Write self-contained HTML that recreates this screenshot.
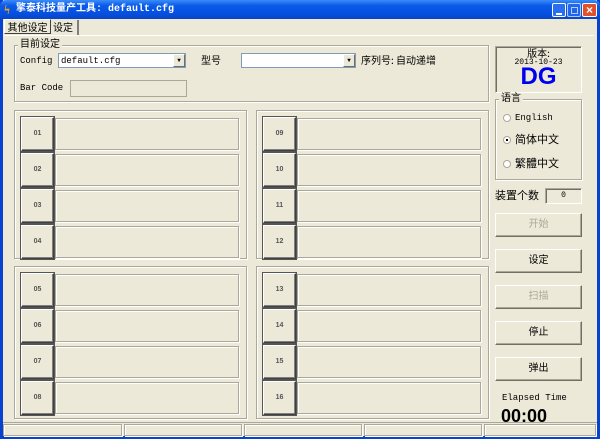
<!DOCTYPE html>
<html><head><meta charset="utf-8"><style>
*{box-sizing:border-box;margin:0;padding:0}
body{width:600px;height:439px;overflow:hidden;background:#0842d0;font-family:"Liberation Mono","Noto Sans CJK SC",monospace;font-size:9px;color:#000;position:relative;line-height:1.15}
.a{position:absolute}
.win{left:3px;top:0;width:594px;height:436px;background:#ece9d8}
.title{left:0;top:0;width:600px;height:19px;background:linear-gradient(#3a8cf8,#0a5ae8 30%,#0550e0 70%,#0846c8);border-radius:6px 6px 0 0}
.etch{border:1px solid #aca899;box-shadow:1px 1px 0 #fff inset,1px 1px 0 #fff}
.sunk{border:1px solid;border-color:#aca899 #fff #fff #aca899;box-shadow:inset 1px 1px 0 #716f64}
.fld{border:1px solid #aca899;box-shadow:inset 1px 1px 0 #fff,1px 1px 0 #fff}
.sb{width:33px;height:34px;background:#ece9d8;border:1px solid;border-color:#fff #404040 #404040 #fff;box-shadow:inset -1px -1px 0 #808080,0 0 0 1px #555;font-size:7px;display:flex;align-items:center;justify-content:center;font-family:"Liberation Sans",sans-serif;font-weight:bold;color:#555}
.btn{left:495px;width:87px;height:24px;border:1px solid;border-color:#fff #716f64 #716f64 #fff;box-shadow:inset -1px -1px 0 #aca899;display:flex;align-items:center;justify-content:center;font-family:"Liberation Sans","Noto Sans CJK SC",sans-serif;font-size:10px}
.dis{color:#aca899}
.leg{background:#ece9d8;padding:0 2px;font-family:"Liberation Sans","Noto Sans CJK SC",sans-serif;font-size:10px}
.cb{background:#fff;border:1px solid #7f9db9}
.arr{position:absolute;right:0;top:0;width:12px;height:13px;background:#ece9d8;border:1px solid;border-color:#fff #716f64 #716f64 #fff;font-size:6px;text-align:center;line-height:11px}
.tb{top:3px;width:14px;height:14px;border:1px solid #fff;border-radius:2px;background:#2a6ef0}
</style></head><body>
<div class="a win"></div>
<div class="a title"></div>
<div class="a" style="left:4px;top:3px;color:#f0a020;font:bold 13px 'Liberation Serif',serif;line-height:1">ϟ</div>
<div class="a" style="left:16px;top:4px;color:#fff;font:bold 10px 'Liberation Mono','Noto Sans CJK SC',monospace;line-height:1.1">擎泰科技量产工具: default.cfg</div>
<div class="a tb" style="left:552px"><div class="a" style="left:3px;top:9px;width:6px;height:2px;background:#fff"></div></div>
<div class="a tb" style="left:567px;opacity:.7"><div class="a" style="left:3px;top:3px;width:7px;height:7px;border:1px solid #fff"></div></div>
<div class="a tb" style="left:582px;width:15px;background:#e0502a;color:#fff;font:bold 12px sans-serif;text-align:center;line-height:12px">×</div>
<div class="a" style="left:4px;top:19px;width:47px;height:15px;border:1px solid;border-color:#fff #404040 #404040 #fff;font:10px 'Noto Sans CJK SC',sans-serif;text-align:center;line-height:13px">其他设定</div>
<div class="a" style="left:53px;top:20px;width:26px;height:15px;border-right:2px solid #808080;font:10px 'Noto Sans CJK SC',sans-serif;line-height:14px">设定</div>
<div class="a" style="left:4px;top:35px;width:590px;height:1px;background:#fff"></div>
<div class="a etch" style="left:14px;top:45px;width:475px;height:57px"></div>
<div class="a leg" style="left:18px;top:38px;line-height:13px">目前设定</div>
<div class="a" style="left:20px;top:56px">Config</div>
<div class="a cb" style="left:58px;top:53px;width:128px;height:15px"><span style="position:absolute;left:2px;top:2px">default.cfg</span><div class="arr">▼</div></div>
<div class="a" style="left:201px;top:54px;font:10px 'Noto Sans CJK SC',sans-serif;line-height:12px">型号</div>
<div class="a cb" style="left:241px;top:53px;width:115px;height:15px"><div class="arr">▼</div></div>
<div class="a" style="left:361px;top:54px;font:10px 'Noto Sans CJK SC',sans-serif;line-height:12px">序列号: 自动递增</div>
<div class="a" style="left:20px;top:83px">Bar Code</div>
<div class="a sunk" style="left:70px;top:80px;width:117px;height:17px;box-shadow:none;border-color:#aca899"></div>
<div class="a sunk" style="left:495px;top:46px;width:87px;height:47px"></div>
<div class="a" style="left:495px;top:47px;width:87px;text-align:center;font:10px 'Noto Sans CJK SC',sans-serif;line-height:11px">版本:</div>
<div class="a" style="left:495px;top:58px;width:87px;text-align:center;font-size:8px;line-height:9px">2013-10-23</div>
<div class="a" style="left:495px;top:66px;width:87px;text-align:center;font:bold 24px 'Liberation Sans',sans-serif;color:#0000f0;line-height:22px">DG</div>
<div class="a etch" style="left:495px;top:99px;width:87px;height:81px"></div>
<div class="a leg" style="left:499px;top:93px;line-height:12px">语言</div>
<div class="a" style="left:503px;top:114px;width:8px;height:8px;border-radius:50%;border:1px solid #aca899;background:#fff"></div>
<div class="a" style="left:515px;top:113px;font-size:9px">English</div>
<div class="a" style="left:503px;top:136px;width:8px;height:8px;border-radius:50%;border:1px solid #aca899;background:#fff"><div class="a" style="left:2px;top:2px;width:2px;height:2px;background:#000"></div></div>
<div class="a" style="left:515px;top:133px;font:11px 'Noto Sans CJK SC',sans-serif;line-height:13px">简体中文</div>
<div class="a" style="left:503px;top:160px;width:8px;height:8px;border-radius:50%;border:1px solid #aca899;background:#fff"></div>
<div class="a" style="left:515px;top:157px;font:11px 'Noto Sans CJK SC',sans-serif;line-height:13px">繁體中文</div>
<div class="a" style="left:495px;top:189px;font:11px 'Noto Sans CJK SC',sans-serif;line-height:13px">装置个数</div>
<div class="a sunk" style="left:545px;top:188px;width:37px;height:16px;text-align:center;line-height:13px;font-size:8px">0</div>
<div class="a btn dis" style="top:213px">开始</div>
<div class="a btn" style="top:249px">设定</div>
<div class="a btn dis" style="top:285px">扫描</div>
<div class="a btn" style="top:321px">停止</div>
<div class="a btn" style="top:357px">弹出</div>
<div class="a" style="left:502px;top:393px;font-size:9px">Elapsed Time</div>
<div class="a" style="left:501px;top:406px;font:bold 18px 'Liberation Sans',sans-serif;line-height:20px">00:00</div>
<div class="a etch" style="left:14px;top:110px;width:233px;height:149px"></div>
<div class="a etch" style="left:256px;top:110px;width:233px;height:149px"></div>
<div class="a etch" style="left:14px;top:266px;width:233px;height:153px"></div>
<div class="a etch" style="left:256px;top:266px;width:233px;height:153px"></div>
<div id="slots"></div>
<div class="a" style="left:3px;top:422px;width:594px;height:1px;background:#aca899"></div>
<div class="a fld" style="left:3px;top:424px;width:119px;height:12px"></div>
<div class="a fld" style="left:124px;top:424px;width:118px;height:12px"></div>
<div class="a fld" style="left:244px;top:424px;width:118px;height:12px"></div>
<div class="a fld" style="left:364px;top:424px;width:118px;height:12px"></div>
<div class="a fld" style="left:484px;top:424px;width:112px;height:12px"></div>
<script>
var s='',ys=[117,153,189,225,273,309,345,381];
for(var c=0;c<2;c++)for(var i=0;i<8;i++){var n=c*8+i+1,x=c?263:21,y=ys[i];
s+='<div class="a sb" style="left:'+x+'px;top:'+y+'px">'+(n<10?'0':'')+n+'</div>';
s+='<div class="a fld" style="left:'+(x+34)+'px;top:'+(y+1)+'px;width:184px;height:32px"></div>';}
document.getElementById('slots').innerHTML=s;
</script>
</body></html>
